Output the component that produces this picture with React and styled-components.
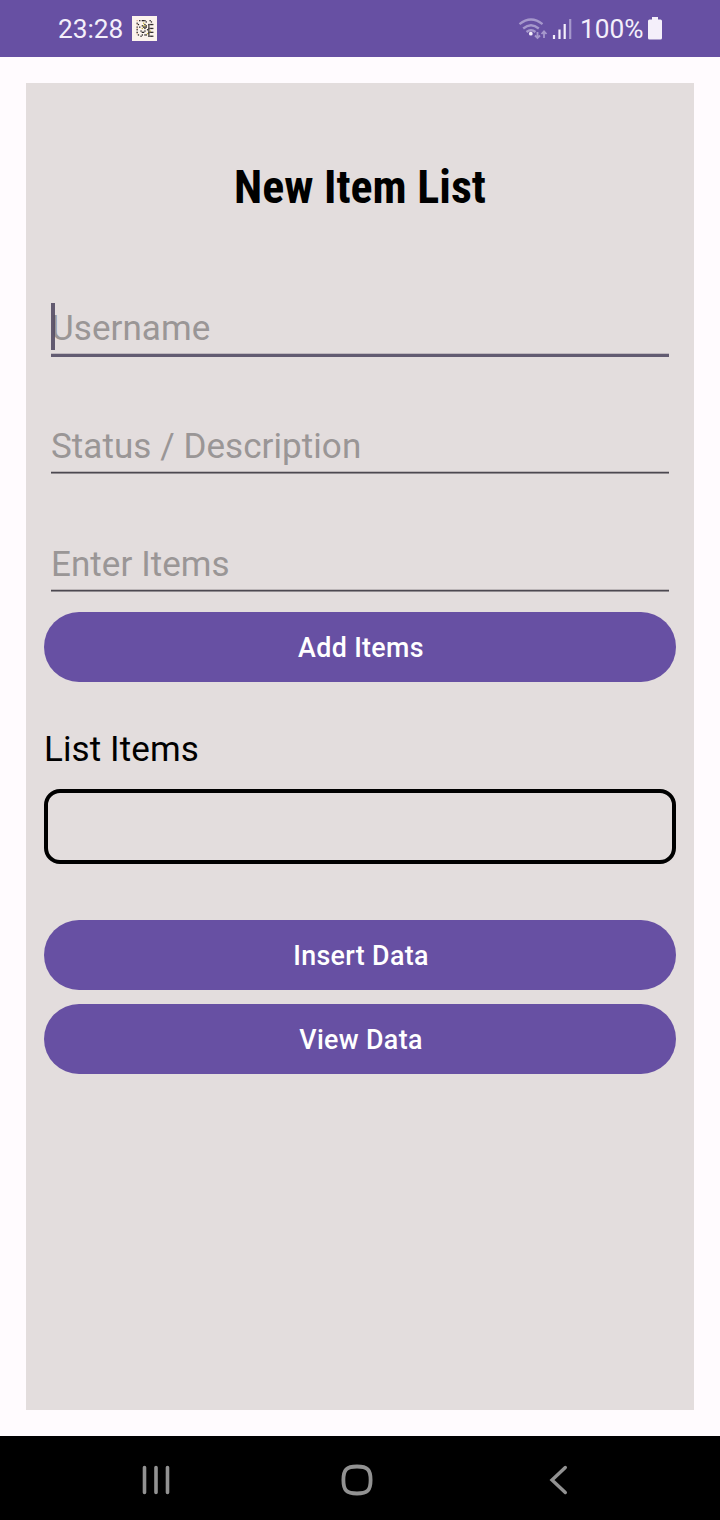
import React from "react";
import styled, { createGlobalStyle } from "styled-components";

const GlobalStyle = createGlobalStyle`
  * { box-sizing: border-box; }
  body { margin: 0; background: #fffbfe; font-family: Roboto, "Liberation Sans", sans-serif; }
`;

const Screen = styled.div`
  width: 720px;
  height: 1520px;
  display: flex;
  flex-direction: column;
  overflow: hidden;
`;

const StatusBar = styled.header`
  flex: none;
  height: 57px;
  padding: 0 55px 0 58px;
  display: flex;
  justify-content: space-between;
  background: #6750a3;
  color: #f4effa;
`;

const StatusGroup = styled.div`
  display: flex;
  align-items: center;
`;

const StatusText = styled.span`
  font-size: 26.25px;
  line-height: 30px;
`;

const AppIcon = styled.svg`
  display: block;
  margin-left: 9px;
`;

const BatteryIcon = styled.svg`
  margin-left: 1.5px;
`;

const Main = styled.main`
  flex: 1;
  padding: 26px;
  display: flex;
`;

const Card = styled.section`
  flex: 1;
  padding: 0 18px;
  display: flex;
  flex-direction: column;
  background: #e3dddd;
`;

const Title = styled.h1`
  margin: 77px 0 0;
  height: 54px;
  line-height: 54px;
  text-align: center;
  white-space: nowrap;
  font-size: 46px;
  font-weight: 700;
  font-stretch: 75%;
  color: #000;
`;

const Fields = styled.div`
  padding: 81px 7px 0;
  display: flex;
  flex-direction: column;
  gap: 56px;
`;

const Field = styled.label`
  position: relative;
  height: 62px;
  display: flex;
  flex-direction: column;
  justify-content: space-between;
`;

const Hint = styled.span`
  margin-top: 13px;
  font-size: 35px;
  line-height: 42px;
  letter-spacing: 0.06px;
  color: #9a9696;
`;

const Underline = styled.span`
  height: 3px;
  margin-bottom: ${(p) => (p.$focused ? "0" : "1px")};
  background: ${(p) =>
    p.$focused
      ? "#625b71"
      : "linear-gradient(#bbb5b7 1px, #4c4850 1px, #4c4850 2px, #918c90 2px)"};
  box-shadow: ${(p) => (p.$focused ? "0 -1px #c0b9bf" : "none")};
`;

const Caret = styled.span`
  position: absolute;
  left: 0;
  top: 8px;
  width: 4px;
  height: 47px;
  background: rgba(83, 75, 100, 0.9);
`;

const Button = styled.button`
  flex: none;
  width: 100%;
  height: 70px;
  margin-top: ${(p) => p.$top};
  padding: 2px 0 0 2px;
  border: 0;
  border-radius: 35px;
  background: #6750a3;
  color: #fff;
  font: 500 26.8px/32px Roboto, "Liberation Sans", sans-serif;
  letter-spacing: 0.35px;
`;

const ListLabel = styled.h2`
  margin: 47px 0 0;
  font-size: 35px;
  line-height: 42px;
  font-weight: 400;
  letter-spacing: 0.1px;
  color: #000;
`;

const ListBox = styled.div`
  height: 75px;
  margin-top: 18px;
  border: 4px solid #000;
  border-radius: 16px;
`;

const NavBar = styled.nav`
  flex: none;
  height: 84px;
  padding: 4px 142px 0 136px;
  display: flex;
  align-items: center;
  justify-content: space-between;
  background: #000;
`;

const pixels = [
  "10b0bbb000b00",
  "0000000b000b0",
  "b0000y0000000",
  "1b0000b00bbbb",
  "0000byyb0b000",
  "b0b00bbb0b000",
  "1000y0b00bbbb",
  "b0000000bb000",
  "000b00b00by00",
  "b000bb000bbbb",
  "10000000yb000",
  "0b00b0bb0b000",
  "000b00000bbbb",
];
const inks = { b: "#292527", y: "#c6b63d", 1: "#e4b596" };

export default function App() {
  return (
    <>
      <GlobalStyle />
      <Screen>
        <StatusBar>
          <StatusGroup>
            <StatusText>23:28</StatusText>
            <AppIcon width="25" height="25" viewBox="0 0 25 25">
              <rect width="25" height="25" fill="#fcf3ed" />
              {pixels.flatMap((row, y) =>
                [...row].map((c, x) =>
                  c === "0" ? null : (
                    <rect key={`${x}-${y}`} x={4.5 + x * 1.3} y={4 + y * 1.3} width="1.3" height="1.3" fill={inks[c]} />
                  )
                )
              )}
            </AppIcon>
          </StatusGroup>
          <StatusGroup>
            <svg width="62" height="30" viewBox="518 14 62 30" fill="none">
              <g stroke="#a698cc" strokeWidth="2.3">
                <path d="M519.5 24.2 Q531 14.8 542.5 24.2" />
                <path d="M523.2 28.5 Q531 22 538.8 28.5" />
                <path d="M526.5 32 Q531 28.6 535.5 32" />
                <path d="M537.5 32 V38 M535 35.5 L537.5 38 L540 35.5" strokeWidth="1.8" />
                <path d="M544 38 V31.5 M541.5 34 L544 31.3 L546.5 34" strokeWidth="1.8" />
              </g>
              <circle cx="530.8" cy="33.7" r="1.9" fill="#f4effa" />
              <g strokeWidth="2.2" stroke="#f4effa">
                <path d="M554 35 V39 M559.5 29.5 V39 M564.7 24 V39" />
                <path d="M570.2 19 V39" stroke="#a698cc" />
              </g>
            </svg>
            <StatusText>100%</StatusText>
            <BatteryIcon width="20" height="26" viewBox="645 16 20 26">
              <path d="M652 17 H658 V19.5 H660.5 Q662 19.5 662 21 V38 Q662 39.5 660.5 39.5 H649.5 Q648 39.5 648 38 V21 Q648 19.5 649.5 19.5 H652 Z" fill="#f4effa" />
            </BatteryIcon>
          </StatusGroup>
        </StatusBar>
        <Main>
          <Card>
            <Title>New Item List</Title>
            <Fields>
              <Field>
                <Hint>Username</Hint>
                <Underline $focused />
                <Caret />
              </Field>
              <Field>
                <Hint>Status / Description</Hint>
                <Underline />
              </Field>
              <Field>
                <Hint>Enter Items</Hint>
                <Underline />
              </Field>
            </Fields>
            <Button $top="19px">Add Items</Button>
            <ListLabel>List Items</ListLabel>
            <ListBox />
            <Button $top="56px">Insert Data</Button>
            <Button $top="14px">View Data</Button>
          </Card>
        </Main>
        <NavBar>
          <svg width="40" height="40" viewBox="136 1460 40 40" stroke="#929292" strokeWidth="3.6" strokeLinecap="round">
            <path d="M144.5 1467.5 V1492.5 M156 1467.5 V1492.5 M167.5 1467.5 V1492.5" />
          </svg>
          <svg width="40" height="40" viewBox="337 1460 40 40" fill="none" stroke="#929292" strokeWidth="3.8">
            <path d="M357 1466.5 C367.5 1466.5 370.6 1469.5 370.6 1480 C370.6 1490.5 367.5 1493.5 357 1493.5 C346.5 1493.5 343.4 1490.5 343.4 1480 C343.4 1469.5 346.5 1466.5 357 1466.5 Z" />
          </svg>
          <svg width="40" height="40" viewBox="538 1460 40 40" fill="none" stroke="#929292" strokeWidth="3.4" strokeLinecap="round">
            <path d="M565.3 1467.5 L552 1480 L565.3 1492.5" />
          </svg>
        </NavBar>
      </Screen>
    </>
  );
}
